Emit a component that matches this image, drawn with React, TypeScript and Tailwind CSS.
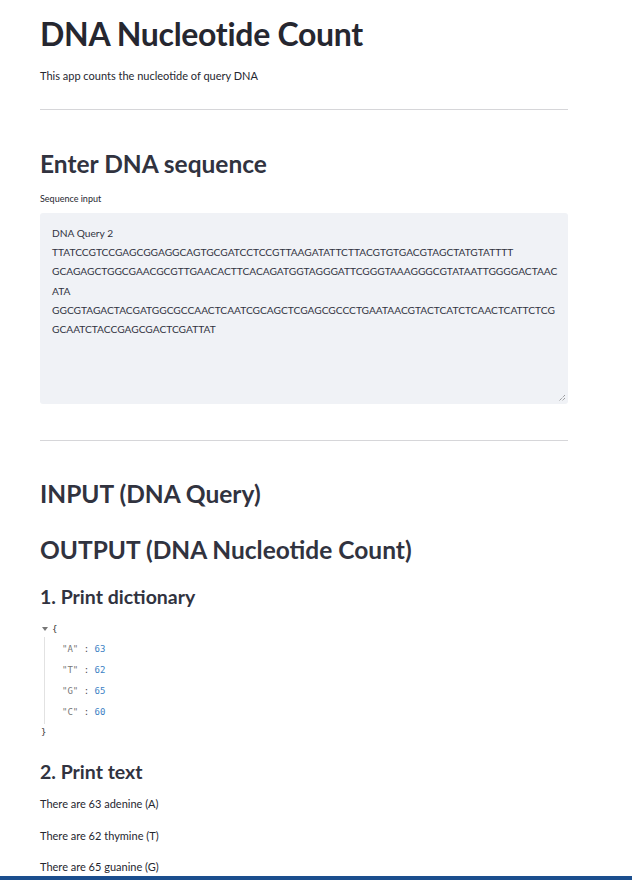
import React from "react";

const seqLines = [
  "DNA Query 2",
  "TTATCCGTCCGAGCGGAGGCAGTGCGATCCTCCGTTAAGATATTCTTACGTGTGACGTAGCTATGTATTTT",
  "GCAGAGCTGGCGAACGCGTTGAACACTTCACAGATGGTAGGGATTCGGGTAAAGGGCGTATAATTGGGGACTAAC",
  "ATA",
  "GGCGTAGACTACGATGGCGCCAACTCAATCGCAGCTCGAGCGCCCTGAATAACGTACTCATCTCAACTCATTCTCG",
  "GCAATCTACCGAGCGACTCGATTAT",
];

const counts: [string, number][] = [
  ["A", 63],
  ["T", 62],
  ["G", 65],
  ["C", 60],
];

export default function App() {
  return (
    <div className="relative h-[880px] w-[632px] overflow-hidden bg-white font-['Lato','Noto_Sans',sans-serif] text-[#262730]">
      <div className="w-[528px] ml-[40px] pt-[14px]">
        <h1 className="text-[32px] leading-[40px] font-bold text-[#262730] tracking-[-0.3px]">DNA Nucleotide Count</h1>
        <p className="mt-[14px] text-[11px] leading-[16px]">This app counts the nucleotide of query DNA</p>
        <hr className="mt-[25px] border-0 border-t border-[#d6d6d9]" />

        <h2 className="mt-[36px] text-[24.5px] leading-[36px] font-bold text-[#31333f]">Enter DNA sequence</h2>
        <div className="mt-[11px] text-[9px] leading-[12px]">Sequence input</div>
        <div className="relative mt-[8px] h-[191px] rounded-[3px] bg-[#f0f2f6] pl-[12px] pt-[11px] text-[10.2px] leading-[19.2px] text-[#31333f]">
          {seqLines.map((l, i) => (
            <div key={i} className="whitespace-nowrap">{l}</div>
          ))}
          <svg className="absolute right-[2px] bottom-[2px]" width="8" height="8" viewBox="0 0 8 8">
            <path d="M7 1 L1 7 M7 4 L4 7" stroke="#777" strokeWidth="1" strokeDasharray="1 1" />
          </svg>
        </div>
        <hr className="mt-[36px] border-0 border-t border-[#d6d6d9]" />

        <h2 className="mt-[35px] text-[24.5px] leading-[36px] font-bold text-[#31333f]">INPUT (DNA Query)</h2>
        <h2 className="mt-[20px] text-[24.5px] leading-[36px] font-bold text-[#31333f]">OUTPUT (DNA Nucleotide Count)</h2>
        <h3 className="mt-[15px] text-[19.5px] leading-[28px] font-bold text-[#31333f]">1. Print dictionary</h3>

        <div className="mt-[10px] font-['DejaVu_Sans_Mono',monospace] text-[9px] leading-[20px]">
          <div className="flex items-center h-[16px]">
            <svg width="8" height="8" viewBox="0 0 8 8" className="ml-[1px] mr-[3px]">
              <path d="M1 2 L7 2 L4 6 Z" fill="#777" />
            </svg>
            <span className="text-[#333]">{"{"}</span>
          </div>
          <div className="ml-[4px] border-l border-[#e2e2e2] pl-[17px] pt-[2px] pb-[1px]">
            {counts.map(([k, v]) => (
              <div key={k} className="h-[21px] leading-[21px]">
                <span className="text-[#777]">"{k}"</span>
                <span className="text-[#555]"> : </span>
                <span className="text-[#3b7fc4]">{v}</span>
              </div>
            ))}
          </div>
          <div className="h-[16px] leading-[16px] ml-[1px] text-[#333]">{"}"}</div>
        </div>

        <h3 className="mt-[18px] text-[19.5px] leading-[28px] font-bold text-[#31333f]">2. Print text</h3>
        <div className="mt-[10px] flex flex-col gap-[15.5px] text-[11px] leading-[16px]">
          <p>There are 63 adenine (A)</p>
          <p>There are 62 thymine (T)</p>
          <p>There are 65 guanine (G)</p>
        </div>
      </div>
      <div className="absolute left-0 bottom-0 h-[4px] w-full bg-[#1b4e8e]" />
    </div>
  );
}
